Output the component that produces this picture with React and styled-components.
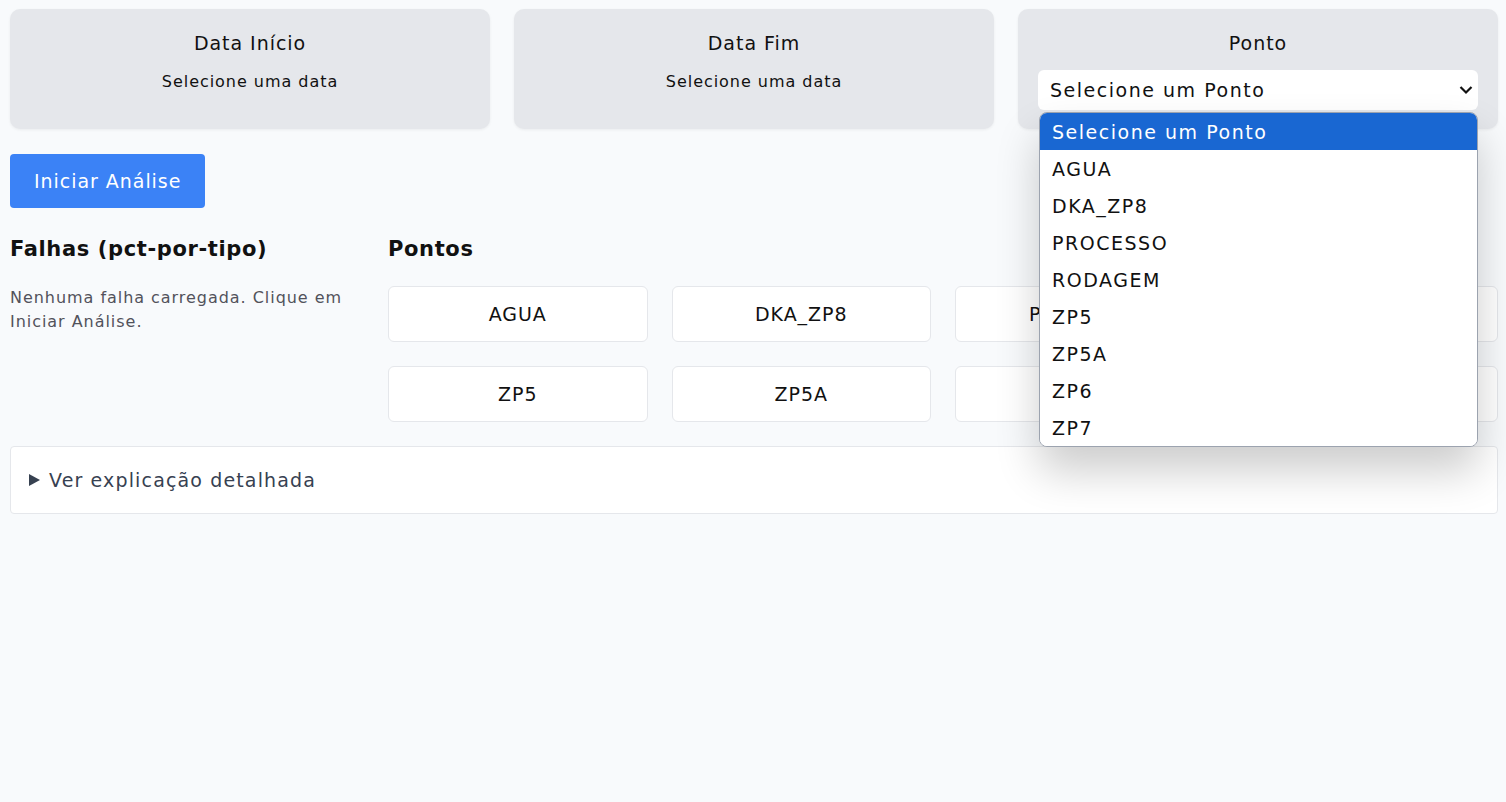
import React, { useState } from 'react'
import styled, { createGlobalStyle } from 'styled-components'

const GlobalStyle = createGlobalStyle`
    * { box-sizing: border-box; }
    body {
        margin: 0;
        background: #f8fafc;
        font-family: "DejaVu Sans", "Noto Sans", sans-serif;
        letter-spacing: 0.06em;
        color: #111827;
    }
`

const Page = styled.div`
    padding: 9px 8px 10px 10px;
    min-height: 802px;
`

const FilterRow = styled.div`
    display: grid;
    grid-template-columns: repeat(3, 1fr);
    gap: 24px;
`

const FilterCard = styled.div`
    position: relative;
    height: 120px;
    background: #e5e7eb;
    border-radius: 10px;
    box-shadow: 0 1px 3px rgba(0, 0, 0, 0.06);
    padding: 20px 20px 0;
    display: flex;
    flex-direction: column;
    align-items: center;
`

const CardTitle = styled.div`
    font-size: 19px;
    line-height: 28px;
    color: #111;
`

const CardHint = styled.div`
    margin-top: 13px;
    font-size: 16px;
    line-height: 24px;
    color: #111;
`

const SelectBox = styled.div`
    margin-top: 13px;
    width: 100%;
    height: 40px;
    background: #fff;
    border-radius: 6px;
    display: flex;
    align-items: center;
    justify-content: space-between;
    padding: 0 5px 0 12px;
    font-size: 19px;
    letter-spacing: 0.08em;
    color: #111;
`

const OptionList = styled.ul`
    position: absolute;
    left: 21px;
    right: 20px;
    top: 103px;
    margin: 0;
    padding: 0;
    list-style: none;
    background: #fff;
    border: 1.5px solid #9ca3af;
    border-radius: 8px;
    overflow: hidden;
    box-shadow: 0 24px 44px rgba(0, 0, 0, 0.2);
    z-index: 10;
`

const OptionItem = styled.li`
    height: 37px;
    display: flex;
    align-items: center;
    padding: 0 12px;
    font-size: 19px;
    letter-spacing: 0.08em;
    background: ${p => (p.$active ? '#1967d2' : '#fff')};
    color: ${p => (p.$active ? '#fff' : '#111')};
`

const StartButton = styled.button`
    margin-top: 25px;
    height: 54px;
    padding: 0 24px;
    border: 0;
    border-radius: 4px;
    background: #3b82f6;
    color: #fff;
    font-family: inherit;
    letter-spacing: inherit;
    font-size: 19px;
`

const Columns = styled.div`
    margin-top: 24px;
    display: grid;
    grid-template-columns: 354px 1fr;
    gap: 24px;
`

const SectionTitle = styled.h2`
    margin: 0 0 20px;
    font-size: 21px;
    line-height: 34px;
    font-weight: 700;
    letter-spacing: 0.03em;
    color: #111;
`

const EmptyText = styled.p`
    margin: 0;
    font-size: 16px;
    line-height: 24px;
    color: #52525b;
`

const PointGrid = styled.div`
    display: grid;
    grid-template-columns: repeat(4, 1fr);
    gap: 24px;
`

const PointCard = styled.div`
    height: 56px;
    background: #fff;
    border: 1px solid #e5e7eb;
    border-radius: 6px;
    display: grid;
    place-items: center;
    font-size: 19px;
    color: #111;
`

const Details = styled.details`
    margin-top: 24px;
    background: #fff;
    border: 1px solid #e5e7eb;
    border-radius: 4px;
`

const Summary = styled.summary`
    height: 66px;
    padding: 0 18px;
    display: flex;
    align-items: center;
    gap: 9px;
    list-style: none;
    font-size: 19px;
    letter-spacing: 0.06em;
    color: #374151;
    cursor: pointer;
    &::-webkit-details-marker { display: none; }
`

const Chevron = () => (
    <svg width="14" height="10" viewBox="0 0 14 10">
        <path d="M1.5 2 L7 7.5 L12.5 2" fill="none" stroke="#111" strokeWidth="2.2" />
    </svg>
)

const Triangle = () => (
    <svg width="11" height="12" viewBox="0 0 11 12">
        <path d="M0 0 L11 6 L0 12 Z" fill="#374151" />
    </svg>
)

const points = ['AGUA', 'DKA_ZP8', 'PROCESSO', 'RODAGEM', 'ZP5', 'ZP5A', 'ZP6', 'ZP7']

const App = () => {
    const [selected] = useState('Selecione um Ponto')
    return (
        <Page>
            <GlobalStyle />
            <FilterRow>
                <FilterCard>
                    <CardTitle>Data Início</CardTitle>
                    <CardHint>Selecione uma data</CardHint>
                </FilterCard>
                <FilterCard>
                    <CardTitle>Data Fim</CardTitle>
                    <CardHint>Selecione uma data</CardHint>
                </FilterCard>
                <FilterCard>
                    <CardTitle>Ponto</CardTitle>
                    <SelectBox>
                        <span>{selected}</span>
                        <Chevron />
                    </SelectBox>
                    <OptionList>
                        <OptionItem $active>Selecione um Ponto</OptionItem>
                        {points.map(p => <OptionItem key={p}>{p}</OptionItem>)}
                    </OptionList>
                </FilterCard>
            </FilterRow>
            <StartButton>Iniciar Análise</StartButton>
            <Columns>
                <div>
                    <SectionTitle>Falhas (pct-por-tipo)</SectionTitle>
                    <EmptyText>Nenhuma falha carregada. Clique em Iniciar Análise.</EmptyText>
                </div>
                <div>
                    <SectionTitle>Pontos</SectionTitle>
                    <PointGrid>
                        {points.map(p => <PointCard key={p}>{p}</PointCard>)}
                    </PointGrid>
                </div>
            </Columns>
            <Details>
                <Summary>
                    <Triangle />
                    Ver explicação detalhada
                </Summary>
            </Details>
        </Page>
    )
}

export default App
